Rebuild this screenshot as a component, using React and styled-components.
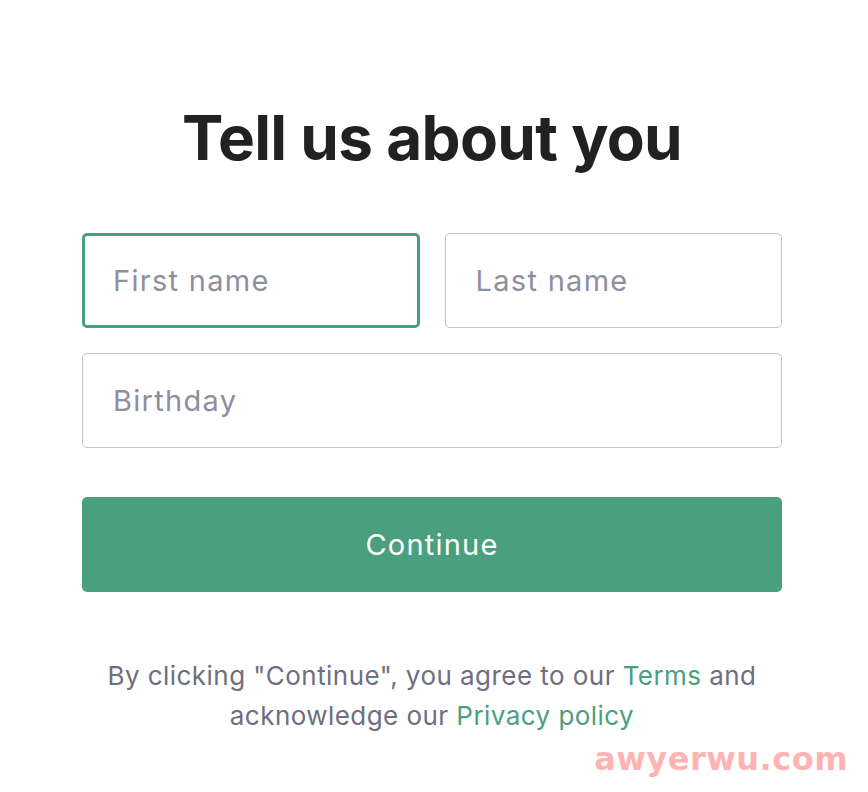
import styled, { createGlobalStyle } from "styled-components";

const GlobalStyle = createGlobalStyle`
	html, body {
		margin: 0;
		padding: 0;
		background: #ffffff;
	}
	body {
		font-family: Inter, "Noto Sans", "Liberation Sans", sans-serif;
	}
`;

const Page = styled.div`
	position: relative;
	width: 868px;
	height: 792px;
	box-sizing: border-box;
	padding: 96px 86px 0 82px;
	display: flex;
	flex-direction: column;
	align-items: stretch;
	overflow: hidden;
`;

const Title = styled.h1`
	margin: 0;
	text-align: center;
	font-size: 62px;
	line-height: 84px;
	font-weight: 700;
	letter-spacing: -0.7px;
	color: #202123;
`;

const Form = styled.form`
	margin-top: 53px;
	display: flex;
	flex-direction: column;
	gap: 25px;
`;

const Row = styled.div`
	display: grid;
	grid-template-columns: 1fr 1fr;
	gap: 25px;
`;

const Field = styled.input`
	box-sizing: border-box;
	width: 100%;
	height: 95px;
	padding: 0 30px;
	font-family: inherit;
	font-size: 29px;
	letter-spacing: 1.3px;
	color: #202123;
	background: #fff;
	border: ${(p) => (p.$focused ? "3px solid #4a9f7e" : "1px solid #c2c1cc")};
	padding-left: ${(p) => (p.$focused ? "28px" : "30px")};
	border-radius: 5px;
	outline: none;
	&::placeholder {
		color: #8e8ea0;
	}
`;

const Button = styled.button`
	margin-top: 24px;
	height: 95px;
	width: 100%;
	border: none;
	border-radius: 5px;
	background: #4a9f7e;
	color: #ffffff;
	font-family: inherit;
	font-size: 29px;
	letter-spacing: 1.2px;
	cursor: pointer;
`;

const Note = styled.p`
	margin: 64px 0 0;
	text-align: center;
	font-size: 26px;
	line-height: 40px;
	letter-spacing: 0.45px;
	color: #6e6e80;
	a {
		color: #4a9f7e;
		text-decoration: none;
	}
`;

const Watermark = styled.div`
	position: absolute;
	right: 20px;
	bottom: 14px;
	font-family: "DejaVu Sans", sans-serif;
	font-weight: 700;
	font-size: 32px;
	letter-spacing: 0.5px;
	color: #ffb3b3;
	pointer-events: none;
`;

const App = () => {
	return (
		<Page>
			<GlobalStyle />
			<Title>Tell us about you</Title>
			<Form onSubmit={(e) => e.preventDefault()}>
				<Row>
					<Field $focused placeholder="First name" />
					<Field placeholder="Last name" />
				</Row>
				<Field placeholder="Birthday" />
				<Button type="submit">Continue</Button>
			</Form>
			<Note>
				By clicking "Continue", you agree to our <a href="#">Terms</a> and
				<br />
				acknowledge our <a href="#">Privacy policy</a>
			</Note>
			<Watermark>awyerwu.com</Watermark>
		</Page>
	);
};

export default App;
